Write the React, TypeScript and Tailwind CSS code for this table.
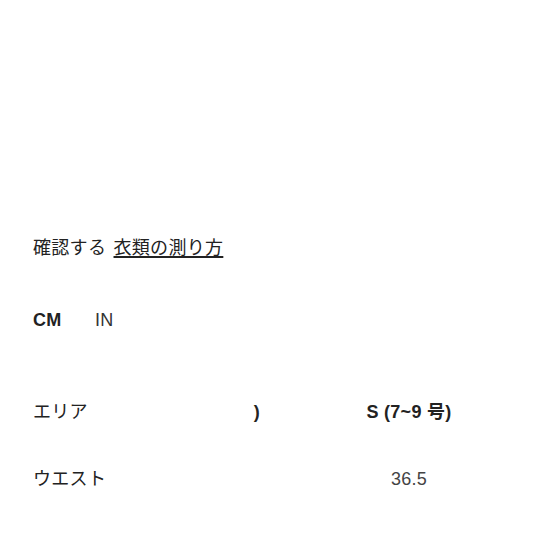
import React from 'react';

const jp = { fontFamily: '"Liberation Sans", "Noto Sans CJK JP", sans-serif' };

const rows = [
  { label: 'エリア', mid: ')', value: 'S (7~9 号)', bold: true },
  { label: 'ウエスト', mid: '', value: '36.5', bold: false },
];

const App: React.FC = () => {
  return (
    <div className="w-[533px] h-[533px] bg-white text-[#222] pl-[33px] pt-[235px] tracking-[0.3px]" style={jp}>
      <div className="text-[18px] leading-[26px]">
        確認する <span className="ml-[2px] underline underline-offset-[2px] decoration-[1.5px]">衣類の測り方</span>
      </div>

      <div className="flex items-center mt-[46px] text-[18px] leading-[26px]">
        <span className="font-bold w-[62px]">CM</span>
        <span className="text-[#333]">IN</span>
      </div>

      <div className="mt-[46px]">
        {rows.map((r) => (
          <div key={r.label} className="grid grid-cols-[148px_152px_152px] items-center h-[67px] text-[18px]">
            <span>{r.label}</span>
            <span className="text-center font-bold">{r.mid}</span>
            <span className={r.bold ? 'text-center font-bold' : 'text-center text-[#444]'}>{r.value}</span>
          </div>
        ))}
      </div>
    </div>
  );
};

export default App;
